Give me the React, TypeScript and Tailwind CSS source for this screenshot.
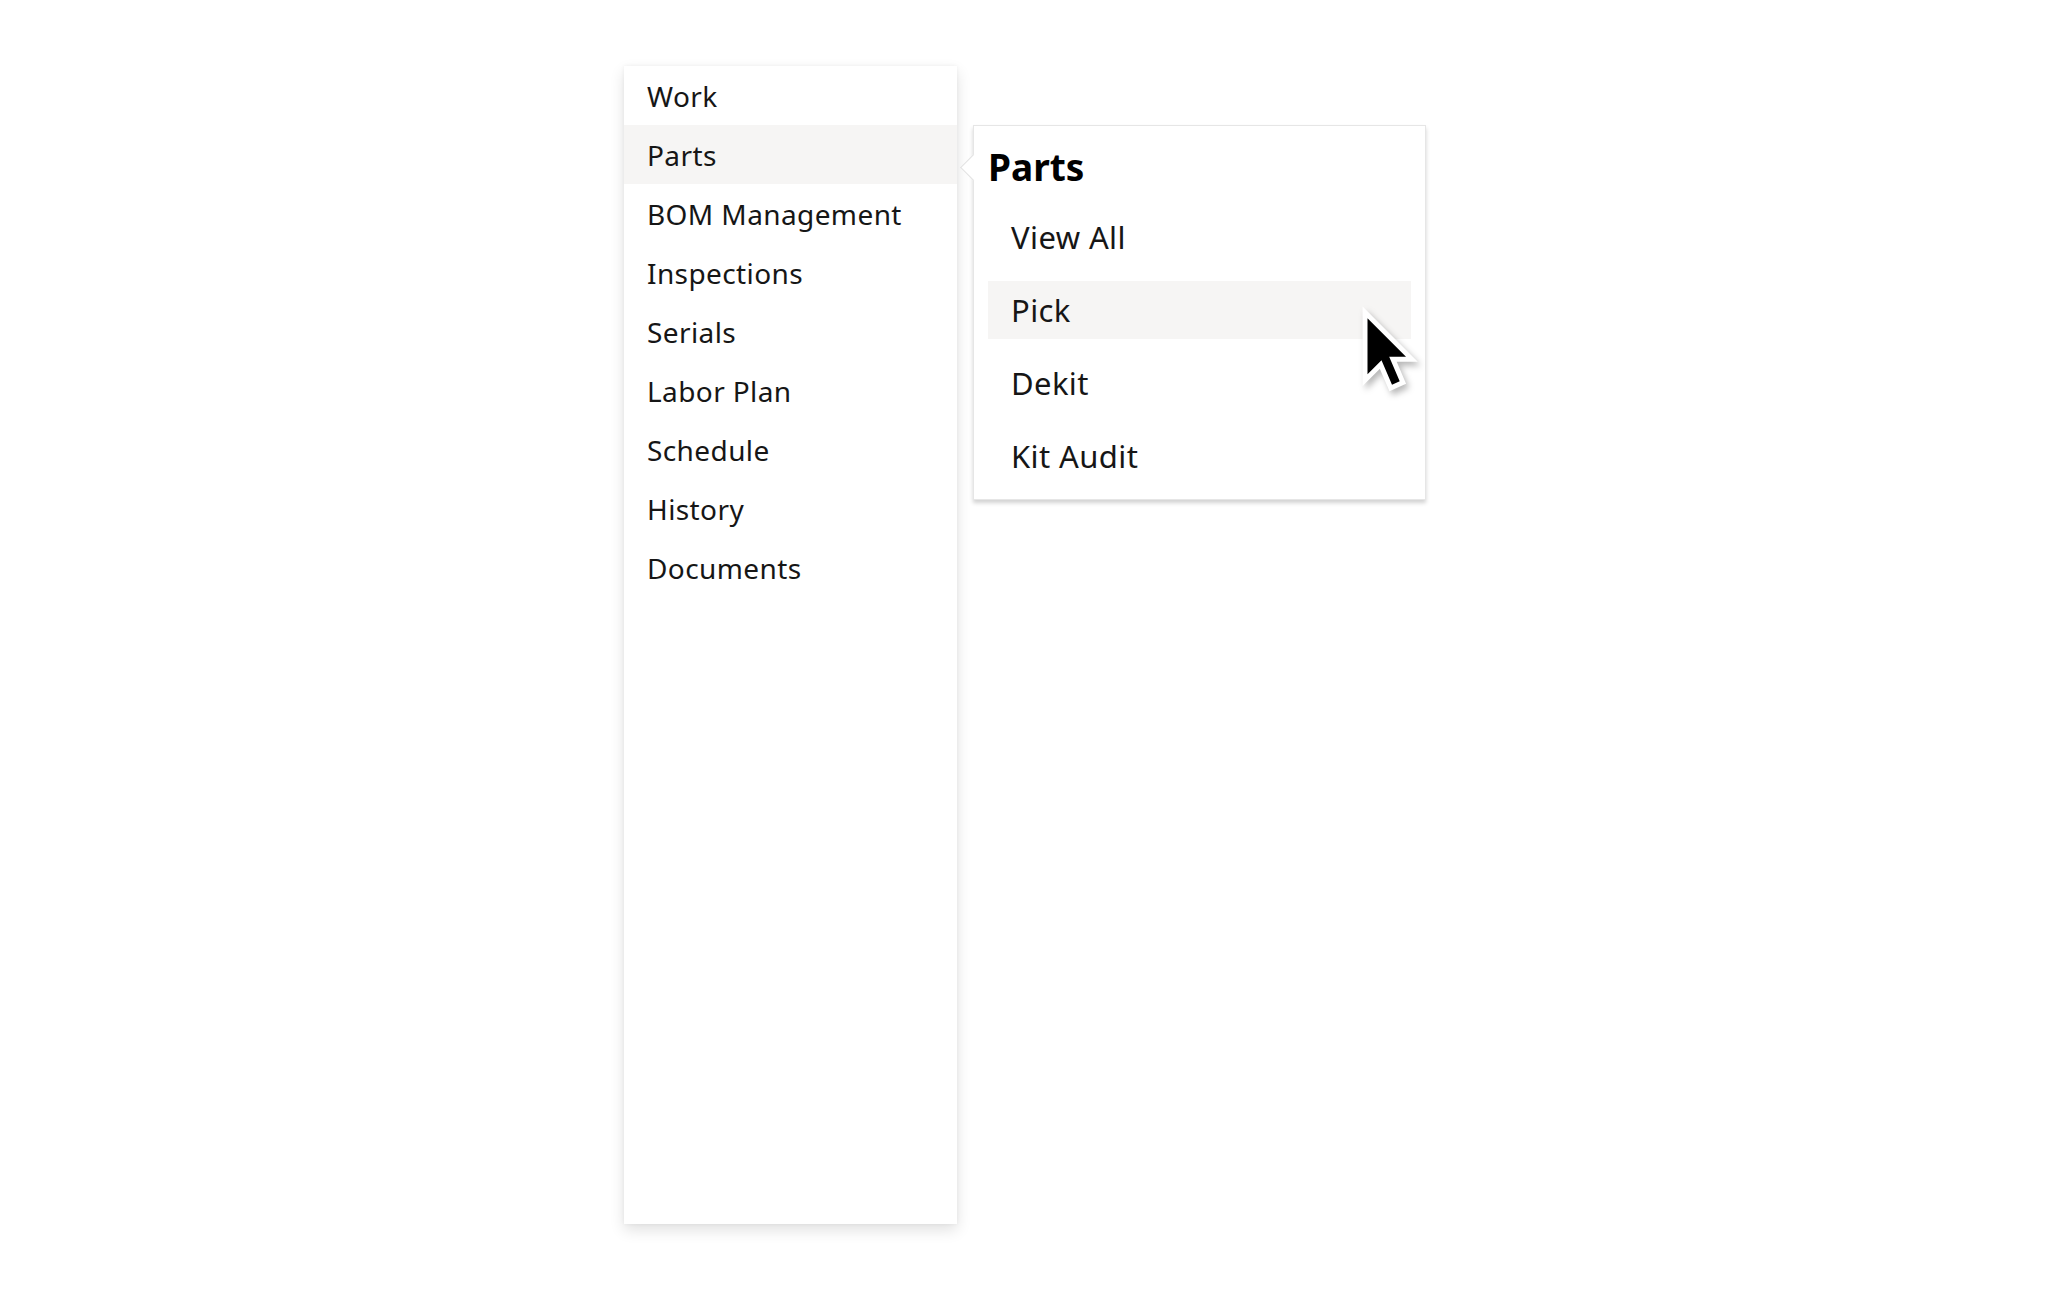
import React from 'react';

const sideItems = ['Work', 'Parts', 'BOM Management', 'Inspections', 'Serials', 'Labor Plan', 'Schedule', 'History', 'Documents'];
const subItems = ['View All', 'Pick', 'Dekit', 'Kit Audit'];

const arrow = 'M0 0 L0 16 L4 12 L7 19 L9.2 18 L6.2 11 L11 11 Z';

function Cursor() {
  return (
    <svg width="63" height="95" viewBox="-3 -4 18 27" className="absolute left-[383px] top-[178px] drop-shadow-[3px_4px_3px_rgba(0,0,0,0.28)]">
      <path d={arrow} fill="#fff" stroke="#fff" strokeWidth="2.8" strokeLinejoin="miter" strokeMiterlimit="6" />
      <path d={arrow} fill="#000" />
    </svg>
  );
}

export default function App() {
  return (
    <div className="min-h-screen bg-white" style={{ fontFamily: '"Noto Sans", sans-serif' }}>
      <div className="flex items-start pl-[624px] pt-[66px]">
        {/* Main nav */}
        <aside className="w-[333px] h-[1158px] bg-white shadow-[0_6px_14px_rgba(0,0,0,0.12),0_0_4px_rgba(0,0,0,0.05)] flex flex-col">
          {sideItems.map((item) => (
            <div
              key={item}
              className={`h-[59px] flex items-center pl-[23px] text-[28px] tracking-[0.4px] text-[#161616] ${item === 'Parts' ? 'bg-[#f6f5f4]' : ''}`}
            >
              {item}
            </div>
          ))}
        </aside>

        {/* Flyout */}
        <div className="relative ml-[16px] mt-[59px] w-[453px] bg-white border border-[#e6e6e6] shadow-[0_3px_4px_rgba(0,0,0,0.18)] pt-3 pb-[14px]">
          <div className="absolute -left-[10px] top-[32px] w-[19px] h-[19px] rotate-45 bg-white border-l border-b border-[#e2e2e2]" />
          <div className="relative h-[58px] flex items-center pl-[14px] text-[37px] font-bold text-black mb-3">Parts</div>
          <div className="flex flex-col gap-[15px] px-[14px]">
            {subItems.map((item) => (
              <div
                key={item}
                className={`h-[58px] flex items-center pl-[23px] text-[31px] tracking-[0.4px] text-[#161616] ${item === 'Pick' ? 'bg-[#f6f5f4]' : ''}`}
              >
                {item}
              </div>
            ))}
          </div>
          <Cursor />
        </div>
      </div>
    </div>
  );
}
